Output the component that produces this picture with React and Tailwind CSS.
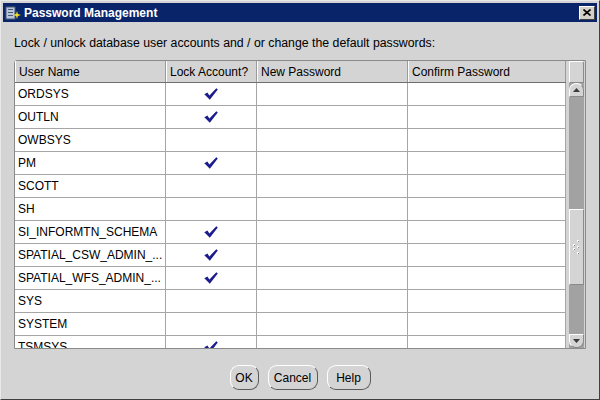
import React from 'react'

const USERS = [
  { name: 'ORDSYS', locked: true },
  { name: 'OUTLN', locked: true },
  { name: 'OWBSYS', locked: false },
  { name: 'PM', locked: true },
  { name: 'SCOTT', locked: false },
  { name: 'SH', locked: false },
  { name: 'SI_INFORMTN_SCHEMA', locked: true },
  { name: 'SPATIAL_CSW_ADMIN_...', locked: true },
  { name: 'SPATIAL_WFS_ADMIN_...', locked: true },
  { name: 'SYS', locked: false },
  { name: 'SYSTEM', locked: false },
  { name: 'TSMSYS', locked: true },
]

const Check = () => (
  <svg width="14" height="12" viewBox="0 0 14 12">
    <polygon points="0.3,6.2 3.4,4.6 5.4,7.4 12.3,0.3 13.8,1.6 5.8,11.8" fill="#1c1c8e" />
  </svg>
)

const TitleIcon = () => (
  <svg width="16" height="16" viewBox="0 0 16 16">
    <rect x="1" y="2" width="9" height="12" fill="#b8c4d8" stroke="#4a5a7a" strokeWidth="1" />
    <rect x="3" y="4" width="5" height="1" fill="#4a5a7a" />
    <rect x="3" y="7" width="5" height="1" fill="#4a5a7a" />
    <rect x="3" y="10" width="5" height="1" fill="#4a5a7a" />
    <path d="M12 6 L12.9 9.1 L16 10 L12.9 10.9 L12 14 L11.1 10.9 L8 10 L11.1 9.1 Z" fill="#f4e020" />
  </svg>
)

const Button = ({ children, w }) => (
  <button
    className={`${w} h-[25px] rounded-[9px] border border-t-white border-l-white border-r-[#5a5a5a] border-b-[#5a5a5a] bg-[#d4d4d4] text-[12px] text-black flex items-center justify-center`}
  >
    {children}
  </button>
)

const COLS = ['w-[151px]', 'w-[91px]', 'w-[151px]', 'w-[158px]']
const HEADERS = ['User Name', 'Lock Account?', 'New Password', 'Confirm Password']

export default function App() {
  return (
    <div
      className="w-[600px] h-[400px] bg-[#d4d4d4] border border-t-[#e8e8e8] border-l-[#e8e8e8] border-r-[#404040] border-b-[#404040] p-[2px] flex flex-col overflow-hidden"
      style={{ fontFamily: '"Liberation Sans", Arial, sans-serif' }}
    >
      {/* Title bar */}
      <div className="h-[19px] shrink-0 bg-[#0a246a] flex items-center pl-[2px] pr-[2px]">
        <TitleIcon />
        <span className="ml-[3px] text-white font-bold text-[12px] leading-none">Password Management</span>
        <div className="ml-auto w-[16px] h-[14px] bg-[#d4d0c8] border border-t-white border-l-white border-r-[#404040] border-b-[#404040] flex items-center justify-center">
          <svg width="8" height="7" viewBox="0 0 8 7">
            <path d="M0.5 0.5 L7.5 6.5 M7.5 0.5 L0.5 6.5" stroke="#000" strokeWidth="1.6" />
          </svg>
        </div>
      </div>

      <div className="flex-1 px-[11px] flex flex-col">
        <div className="mt-[14px] h-[14px] text-[12.3px] leading-[14px] text-black">
          Lock / unlock database user accounts and / or change the default passwords:
        </div>

        {/* Table */}
        <div className="mt-[10px] h-[289px] border border-[#8a8a8a] rounded-tl-[3px] flex bg-[#d4d4d4]">
          <div className="w-[551px] flex flex-col">
            <div className="h-[22px] flex border-b border-[#6e6e6e] bg-[#d4d4d4]">
              {HEADERS.map((h, i) => (
                <div
                  key={h}
                  className={`${COLS[i]} h-full border-l border-l-white border-r border-r-[#9a9a9a] pl-[3px] flex items-center text-[12px] text-black`}
                >
                  {h}
                </div>
              ))}
            </div>
            <div className="h-[265px] overflow-hidden bg-white">
              {USERS.map((u) => (
                <div key={u.name} className="h-[23px] flex border-b border-[#a6a6a6]">
                  <div className={`${COLS[0]} border-r border-[#a6a6a6] pl-[3px] flex items-center text-[12px] text-black`}>
                    {u.name}
                  </div>
                  <div className={`${COLS[1]} border-r border-[#a6a6a6] flex items-center justify-center`}>
                    {u.locked && <Check />}
                  </div>
                  <div className={`${COLS[2]} border-r border-[#a6a6a6]`} />
                  <div className={`${COLS[3]} border-r border-[#a6a6a6]`} />
                </div>
              ))}
            </div>
          </div>

          {/* Scroll column */}
          <div className="w-[19px] pl-[3px] pr-[1px] flex flex-col">
            <div className="h-[22px] border border-t-white border-l-white border-r-[#8a8a8a] border-b-[#8a8a8a] rounded-tr-[3px]" />
            <div className="h-[265px] flex flex-col bg-[#a2a2a2]">
              <div className="h-[14px] bg-[#d4d4d4] rounded-t-[7px] border border-t-white border-l-white border-r-[#8a8a8a] border-b-[#8a8a8a] flex items-center justify-center">
                <svg width="7" height="4" viewBox="0 0 7 4"><polygon points="3.5,0 7,4 0,4" fill="#3a3a3a" /></svg>
              </div>
              <div className="h-[112px]" />
              <div className="h-[76px] bg-[#d4d4d4] border border-t-white border-l-white border-r-[#8a8a8a] border-b-[#8a8a8a] flex items-center justify-center">
                <svg width="8" height="14" viewBox="0 0 8 14">
                  <rect x="4" y="0" width="2" height="2" fill="#fff" />
                  <rect x="0" y="4" width="2" height="2" fill="#fff" />
                  <rect x="4" y="6" width="2" height="2" fill="#fff" />
                  <rect x="0" y="8" width="2" height="2" fill="#fff" />
                  <rect x="4" y="12" width="2" height="2" fill="#fff" />
                  <rect x="5" y="1" width="1" height="1" fill="#8a8a8a" />
                  <rect x="1" y="5" width="1" height="1" fill="#8a8a8a" />
                  <rect x="5" y="7" width="1" height="1" fill="#8a8a8a" />
                  <rect x="1" y="9" width="1" height="1" fill="#8a8a8a" />
                  <rect x="5" y="13" width="1" height="1" fill="#8a8a8a" />
                </svg>
              </div>
              <div className="flex-1" />
              <div className="h-[14px] bg-[#d4d4d4] rounded-b-[7px] border border-t-white border-l-white border-r-[#8a8a8a] border-b-[#8a8a8a] flex items-center justify-center">
                <svg width="7" height="4" viewBox="0 0 7 4"><polygon points="0,0 7,0 3.5,4" fill="#3a3a3a" /></svg>
              </div>
            </div>
          </div>
        </div>

        {/* Buttons */}
        <div className="mt-[16px] flex justify-center gap-[9px]">
          <Button w="w-[29px]">OK</Button>
          <Button w="w-[50px]">Cancel</Button>
          <Button w="w-[44px]">Help</Button>
        </div>
      </div>
    </div>
  )
}
